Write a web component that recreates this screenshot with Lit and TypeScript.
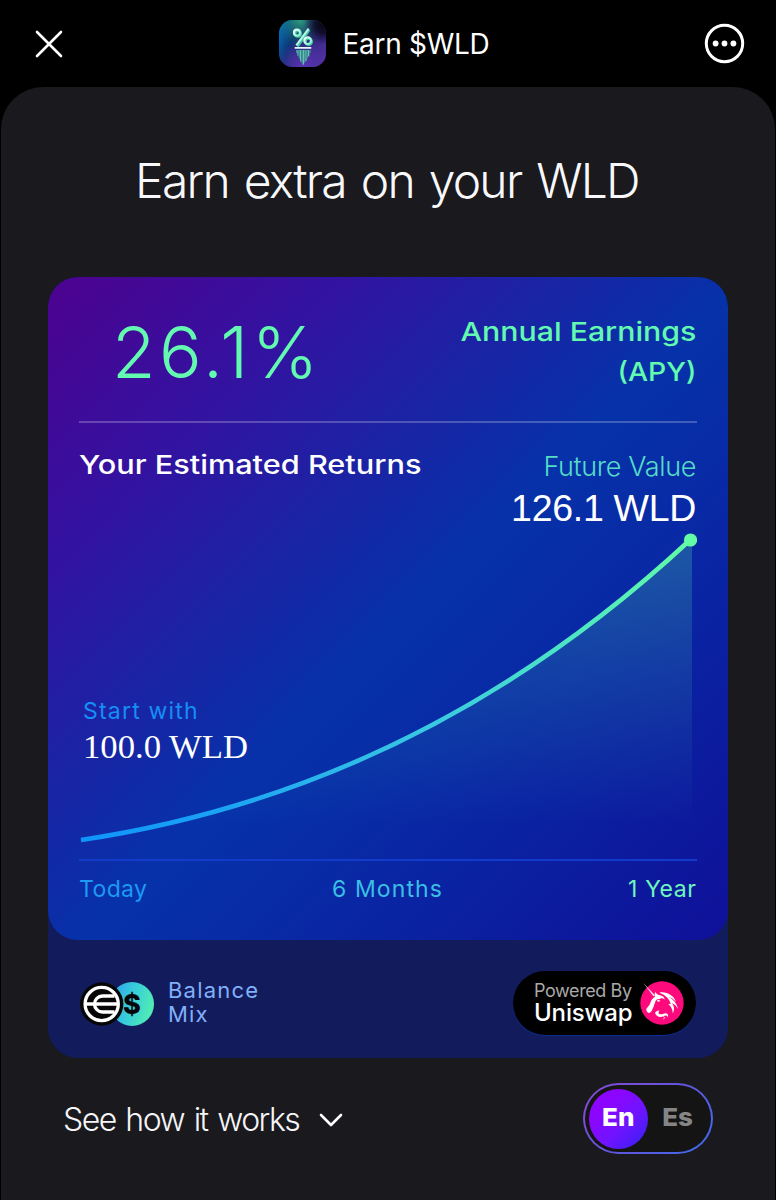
import { LitElement, html, css, svg } from 'lit';
import { customElement, state } from 'lit/decorators.js';
import { classMap } from 'lit/directives/class-map.js';

@customElement('app-header')
class AppHeader extends LitElement {
  static styles = css`
    :host { display: grid; grid-template-columns: 1fr auto 1fr; align-items: center; height: 87px; padding: 0 31px 0 35px; box-sizing: border-box; }
    .brand { display: flex; align-items: center; gap: 17px; padding-right: 12px; }
    .name { font-size: 28px; line-height: 34px; font-weight: 420; letter-spacing: -.3px; white-space: nowrap; padding-top: 1px; }
    .more { justify-self: end; }
    svg { display: block; }
  `;
  render() {
    const drips = [[108, 142], [112, 150], [116, 158], [120, 167], [124, 172], [128, 177], [132, 171], [136, 166], [140, 158], [144, 152], [148, 143]];
    return html`
      <svg width="28" height="28" viewBox="0 0 28 28" fill="none" stroke="#fff" stroke-width="2.6" stroke-linecap="round">
        <path d="M2 2 26 26M26 2 2 26" />
      </svg>
      <div class="brand">
        <svg width="47" height="47" viewBox="57 45 141 141">
          <defs>
            <linearGradient id="base" x1="0" y1=".3" x2="1" y2=".7">
              <stop offset="0" stop-color="#0768b8" /><stop offset=".28" stop-color="#0a3470" />
              <stop offset=".55" stop-color="#2c2377" /><stop offset="1" stop-color="#4c2f9c" />
            </linearGradient>
            <radialGradient id="green" cx=".45" cy="0" r=".6">
              <stop offset="0" stop-color="#2f9c7c" /><stop offset="1" stop-color="#0f5c6c" stop-opacity="0" />
            </radialGradient>
            <radialGradient id="dark" cx=".95" cy=".1" r=".42">
              <stop offset="0" stop-color="#07040f" /><stop offset=".45" stop-color="#0c0820" stop-opacity=".85" /><stop offset="1" stop-color="#120a38" stop-opacity="0" />
            </radialGradient>
            <radialGradient id="violet" cx=".5" cy="1" r=".6">
              <stop offset="0" stop-color="#5a35b4" /><stop offset="1" stop-color="#5a35b4" stop-opacity="0" />
            </radialGradient>
            <linearGradient id="mint" x1="0" y1="0" x2="1" y2="1">
              <stop offset="0" stop-color="#f2fffb" /><stop offset="1" stop-color="#7df0cc" />
            </linearGradient>
          </defs>
          <rect x="57" y="45" width="141" height="141" rx="40" fill="url(#base)" />
          <rect x="57" y="45" width="141" height="141" rx="40" fill="url(#violet)" />
          <rect x="57" y="45" width="141" height="141" rx="40" fill="url(#green)" />
          <rect x="57" y="45" width="141" height="141" rx="40" fill="url(#dark)" />
          <g fill="none" stroke="#3fc79f" stroke-width="7" transform="translate(3 3)">
            <circle cx="111" cy="83" r="8.5" /><circle cx="143" cy="107" r="9.5" /><path d="M145 72 110 122" />
          </g>
          <g fill="none" stroke="url(#mint)" stroke-width="6.5">
            <circle cx="111" cy="83" r="9" /><circle cx="143" cy="107" r="10" /><path d="M146 71 109 121" />
          </g>
          <rect x="104" y="126" width="50" height="5" rx="1" fill="#dffcf3" />
          ${drips.map(([x, y], i) => svg`<rect x=${x} y="135" width="4" height=${y - 133} fill=${i % 2 ? '#5fc4b0' : '#3a9590'} />`)}
        </svg>
        <span class="name">Earn $WLD</span>
      </div>
      <svg class="more" width="41" height="41" viewBox="0 0 41 41">
        <circle cx="20.5" cy="20.5" r="18.2" fill="none" stroke="#fff" stroke-width="3" />
        <g fill="#fff"><circle cx="11.6" cy="20.5" r="2.9" /><circle cx="20.5" cy="20.5" r="2.9" /><circle cx="29.4" cy="20.5" r="2.9" /></g>
      </svg>
    `;
  }
}

@customElement('earnings-card')
class EarningsCard extends LitElement {
  static styles = css`
    :host { display: block; width: 680px; height: 781px; border-radius: 30px; background: #121c5c; overflow: hidden; }
    .main { box-sizing: border-box; height: 663px; border-radius: 30px; padding: 0 32px 0 31px;
      background: linear-gradient(135deg, #4d028f 0%, #3511a0 20%, #1b23a4 37%, #0632a9 52%, #0a22a2 76%, #0f1099 100%); }
    .top { display: flex; justify-content: space-between; box-sizing: border-box; height: 144px; padding: 35px 0 0 33px; margin-right: -1px; }
    .rate { font-size: 71px; line-height: 70px; font-weight: 310; letter-spacing: 3.5px; color: #63f9b1; padding-top: 5px; }
    .label { text-align: right; font-size: 26px; line-height: 40px; font-weight: 500; color: #63f9b1; padding-right: 1px; }
    .label span { display: block; transform: scaleX(1.165); transform-origin: right; }
    .label .narrow { transform: scaleX(1.09); font-weight: 460; }
    .rule { height: 2px; margin-right: -1px; background: rgba(255, 255, 255, .23); }
    .heads { display: flex; justify-content: space-between; height: 107px; }
    .title { font-size: 26px; line-height: 32px; font-weight: 500; color: #fff; padding-top: 26px; transform: scaleX(1.18); transform-origin: left; height: 32px; white-space: nowrap; }
    .future { text-align: right; padding-top: 28px; }
    .future .k { font-size: 27px; line-height: 32px; font-weight: 300; letter-spacing: -.35px; color: #54dcc6; }
    .future .v { font: 37.5px/40px "Liberation Sans", sans-serif; letter-spacing: -.3px; color: #fff; padding-top: 5px; }
    .chart { display: grid; height: 329px; margin-right: -1px; }
    .chart > * { grid-area: 1 / 1; }
    .chart svg { display: block; }
    .start { padding: 166px 0 0 4px; }
    .start .k { font-size: 23px; line-height: 30px; letter-spacing: 1.2px; color: #158ff4; }
    .start .v { font: 34.7px/42px "Liberation Serif", serif; color: #fff; }
    .axis { display: grid; grid-template-columns: 1fr auto 1fr; margin-right: -1px; border-top: 2px solid #133bc9; padding: 13px 1px 0 0; font-size: 23px; line-height: 30px; }
    .today { color: #1c9af4; letter-spacing: .4px; }
    .half { color: #3abfe3; letter-spacing: 1.1px; }
    .year { color: #6ff6bd; letter-spacing: .6px; text-align: right; margin-right: -.6px; }
    .foot { display: flex; align-items: center; justify-content: space-between; height: 118px; padding: 0 32px 0 32px; }
    .mix { display: flex; align-items: center; gap: 13px; padding-top: 9px; }
    .mix-label { font-size: 22px; line-height: 24px; letter-spacing: 1.2px; color: #82b0fa; padding-bottom: 4px; }
    .pill { display: flex; align-items: center; gap: 8px; box-sizing: border-box; width: 183px; height: 64px; margin-top: 8px; padding-left: 21px; border-radius: 32px; background: #000; box-shadow: 0 1px 0 #0b2d92; }
    .by { font-size: 18px; line-height: 22px; letter-spacing: -.4px; color: #a9a9a9; white-space: nowrap; }
    .uni { font-size: 24px; line-height: 22px; font-weight: 450; letter-spacing: -.15px; color: #fff; padding-bottom: 3px; }
    .icons, .pill svg { display: block; flex: none; }
    .dollar { font: 800 27px Inter, sans-serif; }
  `;
  render() {
    return html`
      <section class="main">
        <div class="top">
          <div class="rate">26.1%</div>
          <div class="label"><span>Annual Earnings</span><span class="narrow">(APY)</span></div>
        </div>
        <div class="rule"></div>
        <div class="heads">
          <div class="title">Your Estimated Returns</div>
          <div class="future"><div class="k">Future Value</div><div class="v">126.1 WLD</div></div>
        </div>
        <div class="chart">
          <svg width="618" height="329" viewBox="79 530 618 329">
            <defs>
              <linearGradient id="line" gradientUnits="userSpaceOnUse" x1="81" y1="840" x2="690" y2="540">
                <stop offset="0" stop-color="#0f94fb" /><stop offset=".2" stop-color="#1ba3f4" />
                <stop offset=".55" stop-color="#3bcbe0" /><stop offset=".8" stop-color="#4fe8c0" /><stop offset="1" stop-color="#63fba6" />
              </linearGradient>
              <linearGradient id="area" x1="0" y1="0" x2="0" y2="1">
                <stop offset="0" stop-color="#63fba6" stop-opacity=".23" /><stop offset=".5" stop-color="#50dcb0" stop-opacity=".12" /><stop offset=".95" stop-color="#50dcb0" stop-opacity="0" />
              </linearGradient>
            </defs>
            <path d="M81 840Q422 789 692 540V840Z" fill="url(#area)" />
            <path d="M81 840Q422 789 690 540" fill="none" stroke="url(#line)" stroke-width="4.6" />
            <circle cx="690.5" cy="540" r="6.6" fill="#63fba6" />
          </svg>
          <div class="start"><div class="k">Start with</div><div class="v">100.0 WLD</div></div>
        </div>
        <div class="axis"><span class="today">Today</span><span class="half">6 Months</span><span class="year">1 Year</span></div>
      </section>
      <section class="foot">
        <div class="mix">
          <svg class="icons" width="75" height="44" viewBox="0 0 75 44">
            <defs>
              <linearGradient id="coin" x1="0" y1=".3" x2="1" y2=".6">
                <stop offset="0" stop-color="#2fa4ee" /><stop offset=".5" stop-color="#38cfd8" /><stop offset="1" stop-color="#52eeb0" />
              </linearGradient>
            </defs>
            <circle cx="52" cy="22" r="22" fill="url(#coin)" />
            <text class="dollar" x="52" y="31.6" text-anchor="middle" fill="#05070c">$</text>
            <circle cx="21.7" cy="22" r="21.7" fill="#060606" />
            <g fill="none" stroke="#fff" stroke-width="3.3">
              <circle cx="21.7" cy="22" r="16.6" />
              <path d="M5 22H37M34.5 14H22.5a8 8 0 0 0 0 16H34.5" />
            </g>
          </svg>
          <div class="mix-label">Balance<br />Mix</div>
        </div>
        <div class="pill">
          <div><div class="by">Powered By</div><div class="uni">Uniswap</div></div>
          <svg width="44" height="44" viewBox="34 21 132 132">
            <circle cx="100" cy="87" r="65" fill="#ff0a7c" />
            <path d="M44 27 79 64 74 67Z" fill="#ffd3e6" />
            <path d="M80 54c3 6 8 9 15 10 8 2 12 6 13 13-4-4-9-5-13-3-5 1-6 2-9 2-5 2-6 8-8 13-3 4-2 9-5 13-3 6-4 12-11 15-5 0-10-6-9-12 2-6 9-9 12-18 2-8 6-15 14-19-2-5-1-9 1-14z" fill="#fff" />
            <path d="M84 80c3-3 8-3 11 0-3 4-8 4-11 0z" fill="#fff" />
            <path d="M92 56c20-5 43 8 50 27-8-8-14-12-22-14 14 7 25 20 28 36-6-10-11-15-19-18 9 9 9 23 3 31 0-11-4-20-13-27 2-1 5-1 7 0-2-15-15-28-34-35z" fill="#fff" />
            <path d="M79 117c3-6 9-9 13-7-4 4-3 10 3 11 8 1 14-6 20-2 4 3 4 8 2 11-1-6-6-7-11-4-10 5-22 4-27-9z" fill="#fff" />
            <path d="M104 127c5 2 4 7 0 8" fill="none" stroke="#fff" stroke-width="2.5" />
          </svg>
        </div>
      </section>
    `;
  }
}

@customElement('lang-toggle')
class LangToggle extends LitElement {
  @state() lang = 'En';
  static styles = css`
    :host { display: block; }
    .track { display: flex; align-items: center; box-sizing: border-box; width: 130px; height: 71px; padding: 0 4px; border: 2px solid transparent; border-radius: 36px;
      background: linear-gradient(#141414, #141414) padding-box, linear-gradient(135deg, #8a4ad4, #6155dc 50%, #3f6cf0) border-box; }
    .opt { display: flex; align-items: center; justify-content: center; box-sizing: border-box; width: 59px; height: 60px; padding-bottom: 4px; border-radius: 50%; font-size: 24.5px; font-weight: 800; color: #858585; }
    .opt span { transform: scaleX(1.06); }
    .on { color: #fff; background: linear-gradient(135deg, #8c06ff 30%, #6f14ff 60%, #3420f4 100%); }
  `;
  render() {
    return html`<div class="track">${['En', 'Es'].map((l) => html`
      <div class=${classMap({ opt: true, on: l === this.lang })} @click=${() => (this.lang = l)}><span>${l}</span></div>`)}</div>`;
  }
}

@customElement('app-root')
class AppRoot extends LitElement {
  static styles = css`
    :host { display: block; width: 776px; height: 1200px; overflow: hidden; background: #000; color: #fff; font-family: Inter, sans-serif; }
    .panel { box-sizing: border-box; height: 1113px; margin: 0 1px; border-radius: 42px 42px 0 0; background: #19191e; }
    h1 { margin: 0; box-sizing: border-box; height: 190px; padding: 66px 2px 0 0; font-size: 48px; line-height: 56px; font-weight: 310; letter-spacing: -1.75px; word-spacing: 3px; text-align: center; color: #f8f8fa; }
    earnings-card { margin: 0 47px; }
    .bottom { display: flex; align-items: center; justify-content: space-between; padding: 25px 62px 0 62px; }
    .how { display: flex; align-items: center; gap: 20px; font-size: 32px; line-height: 40px; font-weight: 300; letter-spacing: -1.5px; word-spacing: 2px; color: #f5f5f7; padding-top: 2px; }
    .how svg { display: block; }
  `;
  render() {
    return html`
      <app-header></app-header>
      <main class="panel">
        <h1>Earn extra on your WLD</h1>
        <earnings-card></earnings-card>
        <div class="bottom">
          <div class="how">See how it works
            <svg width="24" height="14" viewBox="0 0 24 14" fill="none" stroke="#fff" stroke-width="2.6" stroke-linecap="round" stroke-linejoin="round"><path d="M2 2 12 12 22 2" /></svg>
          </div>
          <lang-toggle></lang-toggle>
        </div>
      </main>
    `;
  }
}
